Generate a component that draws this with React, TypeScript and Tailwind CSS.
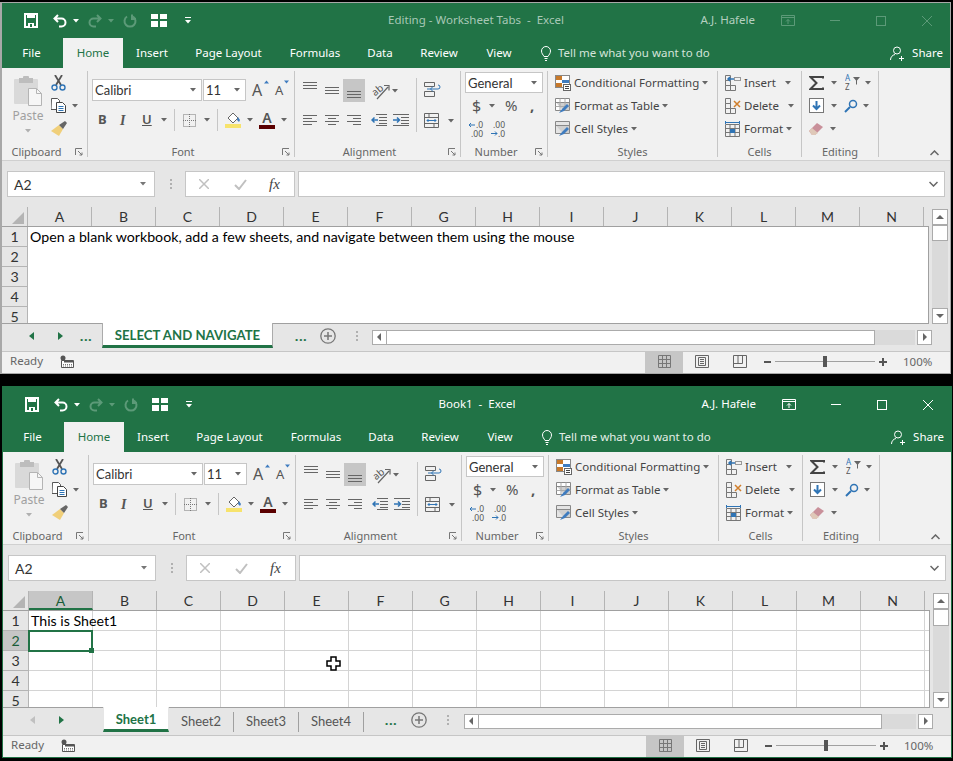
import type { ReactNode } from 'react'

const COLS = ['A', 'B', 'C', 'D', 'E', 'F', 'G', 'H', 'I', 'J', 'K', 'L', 'M', 'N']
const ROWS = [1, 2, 3, 4, 5]

function Svg({ w, h, className, children }: { w: number; h: number; className?: string; children: ReactNode }) {
  return (
    <svg width={w} height={h} viewBox={`0 0 ${w} ${h}`} fill="none" className={`shrink-0 ${className ?? ''}`}>
      {children}
    </svg>
  )
}

function Caret({ className, color = '#666' }: { className?: string; color?: string }) {
  return (
    <Svg w={6} h={4} className={className}>
      <path d="M0 0h6L3 3.5z" fill={color} />
    </Svg>
  )
}

function Launcher() {
  return (
    <Svg w={8} h={8} className="ml-[4px] mr-[4px] mt-[1px]">
      <path d="M0.5 7V0.5H7" stroke="#777" />
      <path d="M3 3l4 4M7 4.5V7H4.5" stroke="#777" />
    </Svg>
  )
}

function Lines({ widths, className }: { widths: number[][]; className?: string }) {
  return (
    <Svg w={16} h={12} className={className}>
      {widths.map(([x, w], i) => (
        <rect key={i} x={x} y={i * 3 + 1} width={w} height={1} fill="#666" />
      ))}
    </Svg>
  )
}

// ---- title bar icons
function SaveIcon() {
  return (
    <Svg w={14} h={15} className="ml-[22px]">
      <path d="M1 1h12v13H1z" stroke="#fff" strokeWidth={2} />
      <rect x={3} y={1} width={8} height={4} fill="#fff" />
      <rect x={4} y={10} width={6} height={4} fill="#fff" />
      <rect x={6} y={11} width={2} height={3} fill="#217346" />
    </Svg>
  )
}

function UndoIcon({ color, className }: { color: string; className: string }) {
  return (
    <Svg w={14} h={14} className={className}>
      <path d="M5 1L1.5 4.5 5 8M2 4.5h6.5a4 4 0 0 1 0 8H6" stroke={color} strokeWidth={2} />
    </Svg>
  )
}

function RedoIcon({ color, className }: { color: string; className: string }) {
  return (
    <Svg w={14} h={14} className={className}>
      <path d="M9 1l3.5 3.5L9 8M12 4.5H5.5a4 4 0 0 0 0 8H8" stroke={color} strokeWidth={2} />
    </Svg>
  )
}

function RepeatIcon({ color, className }: { color: string; className: string }) {
  return (
    <Svg w={14} h={14} className={className}>
      <path d="M4 2.5a5.5 5.5 0 1 0 6 0" stroke={color} strokeWidth={2} />
      <path d="M9 0.5v4.500h4" stroke={color} strokeWidth={2} />
    </Svg>
  )
}

function FormIcon({ className }: { className: string }) {
  return (
    <Svg w={16} h={13} className={className}>
      <rect x={0} y={0} width={7} height={5} fill="#fff" />
      <rect x={9} y={0} width={7} height={5} fill="#fff" />
      <rect x={0} y={7} width={7} height={6} fill="#fff" />
      <rect x={9} y={7} width={7} height={6} fill="#fff" />
    </Svg>
  )
}

function QuickAccess() {
  return (
    <div className="flex items-center">
      <SaveIcon />
      <UndoIcon color="#fff" className="ml-[15px]" />
      <Caret color="#fff" className="ml-[6px]" />
      <RedoIcon color="#5c9a78" className="ml-[9px]" />
      <Caret color="#5c9a78" className="ml-[6px]" />
      <RepeatIcon color="#5c9a78" className="ml-[9px]" />
      <FormIcon className="ml-[14px]" />
      <Svg w={6} h={7} className="ml-[18px]">
        <rect width={6} height={1} fill="#fff" />
        <path d="M0 3h6L3 6.5z" fill="#fff" />
      </Svg>
    </div>
  )
}

function WindowControls({ active }: { active: boolean }) {
  const c = active ? '#ffffff' : '#5c9a78'
  return (
    <div className={`flex items-center justify-end pr-[18px] text-[11.5px] ${active ? 'text-white' : 'text-[#b4d0c0]'}`}>
      <span className="mb-[2px] whitespace-nowrap">A.J. Hafele</span>
      <Svg w={14} h={11} className="ml-[26px]">
        <path d="M0.5 0.5h13v10h-13zM0.5 2.5h13" stroke={c} />
        <path d="M7 9V4.5M5 6.5l2-2 2 2" stroke={c} />
      </Svg>
      <Svg w={10} h={1} className="ml-[35px]">
        <rect width={10} height={1} fill={c} />
      </Svg>
      <Svg w={10} h={10} className="ml-[36px]">
        <rect x={0.5} y={0.5} width={9} height={9} stroke={c} />
      </Svg>
      <Svg w={10} h={10} className="ml-[36px]">
        <path d="M0 0l10 10M10 0L0 10" stroke={c} />
      </Svg>
    </div>
  )
}

function RibbonTabs({ active }: { active: boolean }) {
  const tabs: [string, string][] = [
    ['Insert', 'w-[58px]'],
    ['Page Layout', 'w-[95px]'],
    ['Formulas', 'w-[78px]'],
    ['Data', 'w-[52px]'],
    ['Review', 'w-[66px]'],
    ['View', 'w-[54px]'],
  ]
  return (
    <div className="flex h-[30px] items-stretch bg-[#217346] text-[11.5px] text-white">
      <div className="flex w-[61px] items-center justify-center pr-[2px]">File</div>
      <div className="flex w-[60px] items-center justify-center bg-[#f1f1f1] text-[#217346]">Home</div>
      {tabs.map(([name, width]) => (
        <div key={name} className={`flex items-center justify-center ${width}`}>
          {name}
        </div>
      ))}
      <div className={`ml-[15px] flex items-center ${active ? 'text-[#e4efe8]' : 'text-[#d4e4da]'}`}>
        <Svg w={10} h={15}>
          <path d="M3 10.5C2 8.5 0.5 7.5 0.5 5a4.5 4.5 0 0 1 9 0c0 2.5-1.500 3.500-2.500 5.500zM3.500 12.500h3M4 14.500h2" stroke="#fff" />
        </Svg>
        <span className="ml-[7px] whitespace-nowrap">Tell me what you want to do</span>
      </div>
      <div className="ml-auto flex items-center pr-[7px]">
        <Svg w={15} h={15}>
          <circle cx={7} cy={4.500} r={3.500} stroke="#fff" />
          <path d="M0.500 14c0-3 2-5 4.500-5.500M11.500 10v5M9 12.500h5" stroke="#fff" />
        </Svg>
        <span className="ml-[7px]">Share</span>
      </div>
    </div>
  )
}

// ---- ribbon groups
function Group({ label, width, launcher, children }: { label: string; width: string; launcher?: boolean; children: ReactNode }) {
  return (
    <div className={`flex h-[86px] shrink-0 flex-col border-r border-[#c6c6c6] ${width}`}>
      <div className="h-[74px]">{children}</div>
      <div className="flex h-[12px] items-center text-[11px] leading-none text-[#666]">
        <span className="flex-1 text-center">{label}</span>
        {launcher && <Launcher />}
      </div>
    </div>
  )
}

function Row({ children, className }: { children: ReactNode; className?: string }) {
  return <div className={`flex h-[23px] items-center ${className ?? ''}`}>{children}</div>
}

function ClipboardGroup() {
  return (
    <Group label="Clipboard" width="w-[86px]" launcher>
      <div className="flex">
        <div className="ml-[11px] flex w-[30px] flex-col items-center pt-[5px] text-[12px] text-[#a0a0a0]">
          <Svg w={28} h={30}>
            <rect x={0} y={3} width={24} height={25} rx={1} fill="#d9d9d9" />
            <rect x={5} y={2} width={14} height={5} fill="#bdbdbd" />
            <rect x={9} y={0} width={6} height={4} rx={1} fill="#bdbdbd" />
            <path d="M14.500 12.500h8l5 5v12h-13z" fill="#f6f6f6" stroke="#b4b4b4" />
            <path d="M22.500 12.500v5h5" stroke="#b4b4b4" />
          </Svg>
          <span className="mt-[2px] leading-[16px]">Paste</span>
          <Caret className="mt-[5px]" color="#b0b0b0" />
        </div>
        <div className="ml-[8px] flex flex-col">
          <Row>
            <Svg w={15} h={16}>
              <path d="M4 0l6 10M11 0L5 10" stroke="#555" strokeWidth={1.800} />
              <circle cx={3.500} cy={12.500} r={2.500} stroke="#2f74b5" strokeWidth={1.400} />
              <circle cx={11.500} cy={12.500} r={2.500} stroke="#2f74b5" strokeWidth={1.400} />
            </Svg>
          </Row>
          <Row>
            <Svg w={15} h={15}>
              <path d="M0.500 0.500h6l2 2v9h-8.500z" fill="#fff" stroke="#555" />
              <path d="M5.500 4.500h6l3 3v7h-9z" fill="#fff" stroke="#444" />
              <path d="M7.500 8.500h5M7.500 10.500h5M7.500 12.500h5" stroke="#2f74b5" />
            </Svg>
            <Caret className="ml-[6px]" />
          </Row>
          <Row>
            <Svg w={16} h={15}>
              <path d="M8 4l4 4-4 7-8-5z" fill="#f0cf7a" />
              <path d="M8 4l6-4 2 2-4 6z" fill="#666" />
            </Svg>
          </Row>
        </div>
      </div>
    </Group>
  )
}

function Combo({ text, width, className }: { text: string; width: string; className?: string }) {
  return (
    <div className={`flex h-full items-center justify-between border border-[#c6c6c6] bg-white pl-[2px] pr-[5px] font-['Lato'] text-[13px] text-[#333] ${width} ${className ?? ''}`}>
      <span className="pt-[2px]">{text}</span>
      <Caret />
    </div>
  )
}

function FontGroup() {
  return (
    <Group label="Font" width="w-[207px]" launcher>
      <div className="mt-[8px] flex h-[22px] items-center pl-[4px]">
        <Combo text="Calibri" width="w-[110px]" />
        <Combo text="11" width="w-[43px]" className="ml-[1px]" />
        <span className="ml-[6px] w-[12px] text-[16px] leading-none text-[#555]">A</span>
        <Svg w={6} h={18} className="mb-[2px]">
          <path d="M0 3.500L2.500 0.500 5 3.500z" fill="#3f7cbf" />
        </Svg>
        <span className="ml-[5px] w-[9px] text-[13px] leading-none text-[#555]">A</span>
        <Svg w={6} h={18} className="mb-[2px]">
          <path d="M0 0.500h5L2.500 3.500z" fill="#3f7cbf" />
        </Svg>
      </div>
      <div className="mt-[4px] flex h-[30px] items-center text-[#555]">
        <span className="ml-[10px] w-[8px] text-[13px] font-bold">B</span>
        <span className="ml-[14px] w-[8px] font-['Liberation_Serif'] text-[14px] font-bold italic">I</span>
        <span className="ml-[14px] w-[9px] text-[13px] font-semibold underline">U</span>
        <Caret className="ml-[10px]" />
        <div className="ml-[7px] h-[22px] w-px bg-[#c6c6c6]" />
        <Svg w={13} h={13} className="ml-[8px]">
          <path d="M0.500 0.500h12v12h-12zM6.500 0v13M0 6.500h13" stroke="#777" strokeDasharray="1 1" />
        </Svg>
        <Caret className="ml-[8px]" />
        <div className="ml-[7px] h-[22px] w-px bg-[#c6c6c6]" />
        <Svg w={16} h={16} className="ml-[7px]">
          <path d="M3 6l5-5 5 5-5 5z" fill="#fff" stroke="#666" />
          <path d="M13 5l2 3-1 2-2-2z" fill="#3f7cbf" />
          <rect y={12} width={16} height={4} fill="#f7e36c" />
        </Svg>
        <Caret className="ml-[6px]" />
        <div className="ml-[6px] flex w-[16px] flex-col items-center">
          <span className="text-[14px] font-semibold leading-[12px] text-[#555]">A</span>
          <div className="mt-[1px] h-[4px] w-[16px] bg-[#5b0000]" />
        </div>
        <Caret className="ml-[6px]" />
      </div>
    </Group>
  )
}

function AlignmentGroup() {
  const left = [[0, 14], [0, 9], [0, 14], [0, 9]]
  const center = [[0, 14], [3, 8], [0, 14], [3, 8]]
  const right = [[0, 14], [6, 8], [0, 14], [6, 8]]
  const three = [[0, 14], [0, 14], [0, 14]]
  return (
    <Group label="Alignment" width="w-[166px]" launcher>
      <div className="flex">
        <div className="w-[121px]">
          <div className="mt-[8px] flex h-[23px] items-center">
            <Lines widths={three} className="mb-[7px] ml-[8px]" />
            <Lines widths={three} className="ml-[6px] mt-[3px]" />
            <div className="ml-[2px] flex h-[23px] w-[22px] items-end justify-center bg-[#c6c6c6]">
              <Lines widths={three} className="ml-[2px]" />
            </div>
            <Svg w={20} h={18} className="ml-[6px]">
              <text x={1} y={12} fontSize={10} fill="#555" transform="rotate(-40 6 9)">ab</text>
              <path d="M6 17L17 5M13 3.500h5v5" stroke="#666" strokeWidth={1.200} />
            </Svg>
            <Caret className="ml-[1px]" />
          </div>
          <div className="mt-[3px] flex h-[30px] items-center">
            <Lines widths={left} className="ml-[8px]" />
            <Lines widths={center} className="ml-[6px]" />
            <Lines widths={right} className="ml-[6px]" />
            <Svg w={16} h={12} className="ml-[8px]">
              <path d="M5 0.500h11M8 3.500h8M8 6.500h8M8 9.500h8M5 11.500h11" stroke="#666" />
              <path d="M7 6H1M3.500 3.500L1 6l2.500 2.500" stroke="#2f74b5" strokeWidth={1.500} />
            </Svg>
            <Svg w={16} h={12} className="ml-[6px]">
              <path d="M0 0.500h16M8 3.500h8M8 6.500h8M8 9.500h8M0 11.500h16" stroke="#666" />
              <path d="M0 6h6M4 3.500L6.500 6 4 8.500" stroke="#2f74b5" strokeWidth={1.500} />
            </Svg>
          </div>
        </div>
        <div className="mt-[7px] h-[54px] w-px bg-[#c6c6c6]" />
        <div className="ml-[7px]">
          <Svg w={17} h={15} className="mt-[11px]">
            <path d="M0.500 0.500h10v4h-10zM0.500 9.500h10v5h-10z" stroke="#666" />
            <path d="M3 7h11a2 2 0 0 0 0-4M9 4.500L6.500 7 9 9.500" stroke="#2f74b5" />
          </Svg>
          <div className="mt-[16px] flex items-center">
            <Svg w={15} h={15}>
              <path d="M0.500 0.500h14v14h-14zM0.500 4.500h14M0.500 10.500h14M5 0v4M10 10v5" stroke="#666" />
              <path d="M3 7.500h9M4.500 6l-1.500 1.500L4.500 9M10.500 6l1.500 1.500L10.500 9" stroke="#2f74b5" />
            </Svg>
            <Caret className="ml-[9px]" />
          </div>
        </div>
      </div>
    </Group>
  )
}

function NumberGroup() {
  return (
    <Group label="Number" width="w-[87px]" launcher>
      <div className="mt-[1px] h-[21px] pl-[4px]">
        <Combo text="General" width="w-[78px]" />
      </div>
      <Row className="mt-[1px] text-[#555]">
        <span className="ml-[11px] w-[9px] text-[16px] leading-none">$</span>
        <Caret className="ml-[8px]" />
        <span className="ml-[10px] w-[13px] text-[15px] leading-none">%</span>
        <span className="ml-[12px] text-[15px] font-bold leading-none">,</span>
      </Row>
      <Row className="text-[#555]">
        <Svg w={17} h={20} className="ml-[7px]">
          <path d="M7 6H1M3 4L1 6l2 2" stroke="#2f74b5" />
          <text x={8} y={9} fontSize={8.500} fill="#555">.0</text>
          <text x={3} y={18} fontSize={8.500} fill="#555">.00</text>
        </Svg>
        <Svg w={15} h={20} className="ml-[6px]">
          <text x={2} y={9} fontSize={8.500} fill="#555">.00</text>
          <path d="M0 14.500h6M4 12.500l2 2-2 2" stroke="#2f74b5" />
          <text x={7} y={18} fontSize={8.500} fill="#555">.0</text>
        </Svg>
      </Row>
    </Group>
  )
}

function StyleIcon({ kind }: { kind: 'cond' | 'table' | 'cell' }) {
  return (
    <Svg w={16} h={16} className="ml-[7px] mr-[3px]">
      {kind === 'cond' ? (
        <>
          <rect x={0.500} y={0.500} width={14} height={12} fill="#fff" stroke="#888" />
          <rect x={1} y={1} width={6} height={4} fill="#c8792a" />
          <rect x={7} y={5} width={7} height={3} fill="#3f7cbf" />
          <rect x={1} y={8} width={6} height={4} fill="#c8792a" />
          <rect x={8.500} y={9.500} width={7} height={6} fill="#fff" stroke="#666" />
          <path d="M10 11.500h4M10 13.500h4" stroke="#444" />
        </>
      ) : (
        <>
          <path d="M0.500 0.500h14v12h-14z" fill={kind === 'cell' ? '#e4e4e4' : '#fff'} />
          <path d="M1 4.500h13v8H8z" fill="#cfcfcf" />
          <path d="M0.500 0.500h14v12h-14zM0.500 4.500h14" stroke="#888" />
          {kind === 'table' && <path d="M0.500 8.500h14M5 0.500v12M10 0.500v12" stroke="#aaa" />}
          <path d="M4 15l3-4 5-5 2 2-5 5z" fill="#3f7cbf" />
        </>
      )}
    </Svg>
  )
}

function StylesGroup() {
  return (
    <Group label="Styles" width="w-[170px]">
      <div className="text-[11.5px] text-[#444]">
        <Row>
          <StyleIcon kind="cond" />
          <span className="whitespace-nowrap">Conditional Formatting</span>
          <Caret className="ml-[3px]" />
        </Row>
        <Row>
          <StyleIcon kind="table" />
          <span className="whitespace-nowrap">Format as Table</span>
          <Caret className="ml-[3px]" />
        </Row>
        <Row>
          <StyleIcon kind="cell" />
          <span className="whitespace-nowrap">Cell Styles</span>
          <Caret className="ml-[3px]" />
        </Row>
      </div>
    </Group>
  )
}

function CellsIcon({ kind }: { kind: 'insert' | 'delete' | 'format' }) {
  return (
    <Svg w={16} h={16} className="ml-[7px] mr-[3px]">
      {kind === 'format' ? (
        <>
          <path d="M0.500 3.500h14v12h-14zM0.500 7.500h14M0.500 11.500h14M5 3.500v12M10 3.500v12" stroke="#777" />
          <rect x={5} y={8} width={5} height={4} fill="#2f74b5" />
          <path d="M0.500 0v3M14.500 0v3M1 1.500h13" stroke="#2f74b5" />
        </>
      ) : (
        <>
          <path d="M0.500 0.500h5v5h-5zM0.500 10.500h5v5h-5zM5.500 10.500h5v5h-5zM0.500 5.500h5v5h-5z" stroke="#777" />
          {kind === 'insert' ? (
            <>
              <path d="M9 4H3M5 2L3 4l2 2" stroke="#2f74b5" strokeWidth={1.500} />
              <rect x={9.500} y={2.500} width={6} height={3} stroke="#999" />
            </>
          ) : (
            <path d="M9 3l6 6M15 3L9 9" stroke="#d07f2c" strokeWidth={1.500} />
          )}
        </>
      )}
    </Svg>
  )
}

function CellsGroup() {
  return (
    <Group label="Cells" width="w-[84px]">
      <div className="text-[11.5px] text-[#444]">
        <Row>
          <CellsIcon kind="insert" />
          <span>Insert</span>
          <Caret className="ml-[9px]" />
        </Row>
        <Row>
          <CellsIcon kind="delete" />
          <span>Delete</span>
          <Caret className="ml-[9px]" />
        </Row>
        <Row>
          <CellsIcon kind="format" />
          <span>Format</span>
          <Caret className="ml-[3px]" />
        </Row>
      </div>
    </Group>
  )
}

function EditingGroup() {
  return (
    <Group label="Editing" width="w-[77px]">
      <Row>
        <Svg w={15} h={14} className="ml-[7px]">
          <path d="M14 2.500V1H1.500L7.500 7l-6 6H14v-1.500" stroke="#444" strokeWidth={2} />
        </Svg>
        <Caret className="ml-[7px]" />
        <Svg w={16} h={19} className="ml-[8px]">
          <text x={0} y={8} fontSize={8} fill="#2f74b5">A</text>
          <text x={0} y={17} fontSize={8} fill="#555">Z</text>
          <path d="M8 4h7l-3 3.500V12l-1-1V7.500z" fill="#666" />
        </Svg>
        <Caret className="ml-[4px]" />
      </Row>
      <Row>
        <Svg w={15} h={15} className="ml-[7px]">
          <rect x={0.500} y={0.500} width={14} height={14} fill="#fff" stroke="#777" />
          <path d="M7.500 3v8M4 7.500l3.500 3.500L11 7.500" stroke="#2f74b5" strokeWidth={2} />
        </Svg>
        <Caret className="ml-[7px]" />
        <Svg w={14} h={14} className="ml-[7px]">
          <circle cx={9} cy={5} r={3.500} stroke="#2f74b5" strokeWidth={1.500} />
          <path d="M6 8l-5 5" stroke="#2f74b5" strokeWidth={2} />
        </Svg>
        <Caret className="ml-[5px]" />
      </Row>
      <Row>
        <Svg w={15} h={14} className="ml-[7px]">
          <path d="M0 9l8-8 6 4-8 8H3z" fill="#c9909a" />
          <path d="M0 9l3-3 6 5-3 2H3z" fill="#dfc8b8" />
        </Svg>
        <Caret className="ml-[6px]" />
      </Row>
    </Group>
  )
}

function Ribbon() {
  return (
    <div className="flex h-[92px] bg-[#f1f1f1] pt-[3px]">
      <ClipboardGroup />
      <FontGroup />
      <AlignmentGroup />
      <NumberGroup />
      <StylesGroup />
      <CellsGroup />
      <EditingGroup />
      <div className="flex flex-1 items-end justify-end pb-[4px] pr-[11px]">
        <Svg w={9} h={6}>
          <path d="M0.500 5L4.500 1l4 4" stroke="#666" strokeWidth={1.500} />
        </Svg>
      </div>
    </div>
  )
}

function FormulaBar() {
  return (
    <div className="flex h-[47px] border-t border-[#d0d0d0] bg-[#e6e6e6] pt-[10px]">
      <div className="ml-[5px] flex h-[26px] w-[148px] items-center justify-between border border-[#c6c6c6] bg-white pl-[6px] pr-[8px] font-['Lato'] text-[14px] text-[#333]">
        <span>A2</span>
        <Caret color="#777" />
      </div>
      <div className="ml-[15px] flex h-[26px] flex-col justify-center gap-[2px]">
        <div className="h-[2px] w-[2px] bg-[#b0b0b0]" />
        <div className="h-[2px] w-[2px] bg-[#b0b0b0]" />
        <div className="h-[2px] w-[2px] bg-[#b0b0b0]" />
      </div>
      <div className="ml-[13px] flex h-[26px] w-[110px] items-center border border-[#c6c6c6] bg-white">
        <Svg w={10} h={10} className="ml-[13px]">
          <path d="M0 0l10 10M10 0L0 10" stroke="#c0c0c0" strokeWidth={1.500} />
        </Svg>
        <Svg w={13} h={11} className="ml-[25px]">
          <path d="M1 6l4 4 7-9" stroke="#c0c0c0" strokeWidth={2} />
        </Svg>
        <span className="ml-[22px] font-['Liberation_Serif'] text-[15px] italic text-[#444]">fx</span>
      </div>
      <div className="ml-[3px] flex h-[26px] w-[647px] items-center justify-end border border-[#c6c6c6] bg-white pr-[6px]">
        <Svg w={9} h={6}>
          <path d="M0.500 1l4 4 4-4" stroke="#666" strokeWidth={1.500} />
        </Svg>
      </div>
    </div>
  )
}

function ScrollButton({ dir, className }: { dir: 'up' | 'down' | 'left' | 'right'; className?: string }) {
  const d = { up: 'M4 6h8L8 2z', down: 'M4 2h8L8 6z', left: 'M9 3v8L5 7z', right: 'M6 3v8l4-4z' }[dir]
  const h = dir === 'up' || dir === 'down' ? 8 : 14
  return (
    <div className={`flex shrink-0 items-center justify-center border border-[#ababab] bg-white ${className ?? ''}`}>
      <Svg w={16} h={h} className="-mx-px">
        <path d={d} fill="#666" />
      </Svg>
    </div>
  )
}

function Sheet({ selectable, thumb, rowText }: { selectable: boolean; thumb: string; rowText: string }) {
  return (
    <div className="flex h-[117px] bg-[#e6e6e6]">
      <div className="h-[117px] w-[927px] shrink-0 overflow-hidden border-b border-[#a0a0a0]">
        <div className="flex h-[20px] border-b border-[#a0a0a0] font-['Lato'] text-[14px] leading-[19px] text-[#333]">
          <div className="flex w-[26px] shrink-0 items-end justify-end border-r border-[#b4b4b4] pb-[2px] pr-[3px]">
            <Svg w={12} h={12}>
              <path d="M12 0v12H0z" fill="#b4b4b4" />
            </Svg>
          </div>
          {COLS.map(c => (
            <div
              key={c}
              className={`w-[64px] shrink-0 border-r border-[#b4b4b4] text-center ${selectable && c === 'A' ? 'border-b-2 border-b-[#217346] bg-[#c6c6c6] text-[#185c37]' : ''}`}
            >
              {c}
            </div>
          ))}
        </div>
        <div className="flex h-[96px] font-['Lato'] text-[14.2px] leading-[19px] text-[#333]">
          <div className="w-[26px] shrink-0">
            {ROWS.map(r => (
              <div
                key={r}
                className={`h-[20px] border-b border-r border-[#b4b4b4] text-center ${selectable && r === 2 ? 'border-r-[#217346] bg-[#c6c6c6] text-[#185c37]' : ''}`}
              >
                {r}
              </div>
            ))}
          </div>
          <div className="relative flex-1 border-r border-[#a0a0a0] bg-white">
            {ROWS.map(r => (
              <div key={r} className={`flex h-[20px] ${selectable ? 'border-b border-[#d4d4d4]' : ''}`}>
                {COLS.map(c => (
                  <div
                    key={c}
                    className={`w-[64px] shrink-0 whitespace-nowrap pl-[2px] text-black ${selectable ? 'border-r border-[#d4d4d4]' : ''}`}
                  >
                    {c === 'A' && r === 1 ? rowText : ''}
                  </div>
                ))}
              </div>
            ))}
            {selectable && (
              <>
                <div className="absolute left-[-1px] top-[19px] h-[22px] w-[65px] border-2 border-[#217346]">
                  <div className="absolute -bottom-[3px] -right-[3px] h-[5px] w-[5px] bg-[#217346]" />
                </div>
                <Svg w={15} h={15} className="absolute left-[297px] top-[45px]">
                  <path d="M5 1h5v4h4v5h-4v4H5v-4H1V5h4z" fill="#fff" stroke="#000" strokeWidth={1.500} />
                </Svg>
              </>
            )}
          </div>
        </div>
      </div>
      <div className="ml-[3px] flex w-[16px] flex-col pt-[2px]">
        <ScrollButton dir="up" className="h-[16px] w-[16px]" />
        <div className={`w-[16px] border border-[#ababab] bg-white ${thumb}`} />
        <div className="flex-1 bg-[#dadada]" />
        <ScrollButton dir="down" className="h-[16px] w-[16px]" />
      </div>
    </div>
  )
}

function More({ className }: { className?: string }) {
  return <span className={`w-[14px] text-center text-[13px] font-bold leading-none tracking-[0.5px] text-[#217346] ${className ?? ''}`}>...</span>
}

function TabArrow({ dir, color, className }: { dir: 'left' | 'right'; color: string; className?: string }) {
  return (
    <Svg w={5} h={8} className={className}>
      <path d={dir === 'left' ? 'M5 0v8L0 4z' : 'M0 0v8l5-4z'} fill={color} />
    </Svg>
  )
}

function AddSheet({ className }: { className: string }) {
  return (
    <Svg w={16} h={16} className={className}>
      <circle cx={8} cy={8} r={7.200} stroke="#777" strokeWidth={1.300} />
      <path d="M8 4v8M4 8h8" stroke="#777" strokeWidth={1.500} />
    </Svg>
  )
}

function VDots({ className }: { className: string }) {
  return (
    <div className={`flex flex-col gap-[2px] ${className}`}>
      <div className="h-[2px] w-[2px] bg-[#b0b0b0]" />
      <div className="h-[2px] w-[2px] bg-[#b0b0b0]" />
      <div className="h-[2px] w-[2px] bg-[#b0b0b0]" />
    </div>
  )
}

function HScroll({ thumb }: { thumb: string }) {
  return (
    <div className="flex h-[15px] flex-1 items-stretch pr-[18px]">
      <ScrollButton dir="left" className="w-[15px]" />
      <div className={`border-y border-r border-[#ababab] bg-white ${thumb}`} />
      <div className="flex-1 bg-[#dadada]" />
      <ScrollButton dir="right" className="ml-[2px] w-[15px]" />
    </div>
  )
}

function SheetTabsNavigate() {
  return (
    <div className="flex h-[27px] items-start bg-[#e6e6e6]">
      <div className="flex h-[24px] w-[100px] shrink-0 items-center">
        <TabArrow dir="left" color="#217346" className="ml-[27px]" />
        <TabArrow dir="right" color="#217346" className="ml-[24px]" />
        <More className="ml-[16px]" />
      </div>
      <div className="-mt-px flex h-[25px] w-[171px] shrink-0 items-center justify-center whitespace-nowrap border-x border-b-[3px] border-x-[#ababab] border-b-[#217346] bg-white pt-[4px] font-['Lato'] text-[13.2px] font-bold text-[#217346]">
        SELECT AND NAVIGATE
      </div>
      <div className="flex h-[24px] flex-1 items-center">
        <More className="ml-[21px]" />
        <AddSheet className="ml-[12px]" />
        <VDots className="ml-[20px]" />
        <div className="ml-[14px] flex flex-1 pt-[2px]">
          <HScroll thumb="w-[488px]" />
        </div>
      </div>
    </div>
  )
}

function SheetTabsList() {
  return (
    <div className="flex h-[27px] items-start bg-[#e6e6e6]">
      <div className="flex h-[24px] w-[100px] shrink-0 items-center">
        <TabArrow dir="left" color="#c0c0c0" className="ml-[27px]" />
        <TabArrow dir="right" color="#217346" className="ml-[24px]" />
      </div>
      <div className="-mt-px flex h-[25px] w-[66px] shrink-0 items-center justify-center border-x border-b-[3px] border-x-[#e6e6e6] border-b-[#217346] bg-white pt-[4px] font-['Lato'] text-[13px] font-bold text-[#217346]">
        Sheet1
      </div>
      {['Sheet2', 'Sheet3', 'Sheet4'].map(s => (
        <div key={s} className="mt-[4px] flex h-[20px] w-[65px] shrink-0 items-center justify-center border-r border-[#a0a0a0] font-['Lato'] text-[13px] text-[#555]">
          {s}
        </div>
      ))}
      <div className="flex h-[24px] flex-1 items-center">
        <More className="ml-[20px]" />
        <AddSheet className="ml-[13px]" />
        <VDots className="ml-[20px]" />
        <div className="ml-[15px] flex flex-1 pt-[2px]">
          <HScroll thumb="w-[403px]" />
        </div>
      </div>
    </div>
  )
}

function StatusBar() {
  return (
    <div className="flex h-[22px] items-center border-t border-[#c6c6c6] bg-[#f1f1f1] text-[11.5px] text-[#666]">
      <span className="mb-[3px] ml-[8px] w-[31px]">Ready</span>
      <Svg w={14} h={13} className="mb-[2px] ml-[19px]">
        <circle cx={3} cy={3} r={2.500} fill="#555" />
        <path d="M1.500 5.500h12v7h-12z" stroke="#555" fill="#fff" />
        <path d="M4 5.500h9v2H4z" fill="#555" />
        <path d="M3 9.500h9M3 11h9" stroke="#777" strokeDasharray="1 1" />
      </Svg>
      <div className="ml-auto flex h-full items-center pr-[19px] [&>*]:mb-[2px]">
        <div className="!mb-0 flex h-full w-[38px] items-center justify-center bg-[#c6c6c6] pb-[2px]">
          <Svg w={13} h={13}>
            <path d="M0.500 0.500h12v12h-12zM0.500 4.500h12M0.500 8.500h12M4.500 0.500v12M8.500 0.500v12" stroke="#777" />
          </Svg>
        </div>
        <Svg w={14} h={13} className="ml-[12px]">
          <path d="M0.500 0.500h13v12h-13zM3.500 2.500h7v8h-7zM5 4.500h4M5 6.500h4M5 8.500h4" stroke="#666" />
        </Svg>
        <Svg w={14} h={13} className="ml-[24px]">
          <path d="M0.500 0.500h13v12h-13zM0.500 8.500h9v-8M5 0.500v8" stroke="#666" />
        </Svg>
        <div className="ml-[17px] h-[2px] w-[7px] bg-[#555]" />
        <div className="relative ml-[4px] h-px w-[100px] bg-[#a0a0a0]">
          <div className="absolute left-[48px] top-[-5px] h-[11px] w-[4px] bg-[#555]" />
        </div>
        <Svg w={8} h={8} className="ml-[4px]">
          <path d="M4 0v8M0 4h8" stroke="#555" strokeWidth={2} />
        </Svg>
        <span className="ml-[16px] w-[28px] whitespace-nowrap">100%</span>
      </div>
    </div>
  )
}

function ExcelWindow({ title, active, className, children }: { title: string; active: boolean; className: string; children: ReactNode }) {
  return (
    <div className={`flex h-[372px] flex-col overflow-hidden bg-[#e6e6e6] font-['Noto_Sans',sans-serif] ${className}`}>
      <div className="grid h-[35px] shrink-0 grid-cols-[1fr_auto_1fr] items-center bg-[#217346]">
        <QuickAccess />
        <span className={`mb-[2px] whitespace-pre text-[11.5px] ${active ? 'text-white' : 'text-[#a8c8b6]'}`}>{title}</span>
        <WindowControls active={active} />
      </div>
      <RibbonTabs active={active} />
      <Ribbon />
      <FormulaBar />
      {children}
    </div>
  )
}

export default function App() {
  return (
    <div className="h-[761px] w-[953px] overflow-hidden bg-black pt-[2px]">
      <ExcelWindow
        title="Editing - Worksheet Tabs  -  Excel"
        active={false}
        className="w-[951px] border-y border-r border-l-2 border-[#a8a8a8]"
      >
        <Sheet selectable={false} thumb="h-[16px]" rowText="Open a blank workbook, add a few sheets, and navigate between them using the mouse" />
        <SheetTabsNavigate />
        <StatusBar />
      </ExcelWindow>
      <ExcelWindow
        title="Book1  -  Excel"
        active
        className="ml-[2px] mt-[12px] w-[950px] border border-[#217346]"
      >
        <Sheet selectable thumb="h-[17px]" rowText="This is Sheet1" />
        <SheetTabsList />
        <StatusBar />
      </ExcelWindow>
    </div>
  )
}
